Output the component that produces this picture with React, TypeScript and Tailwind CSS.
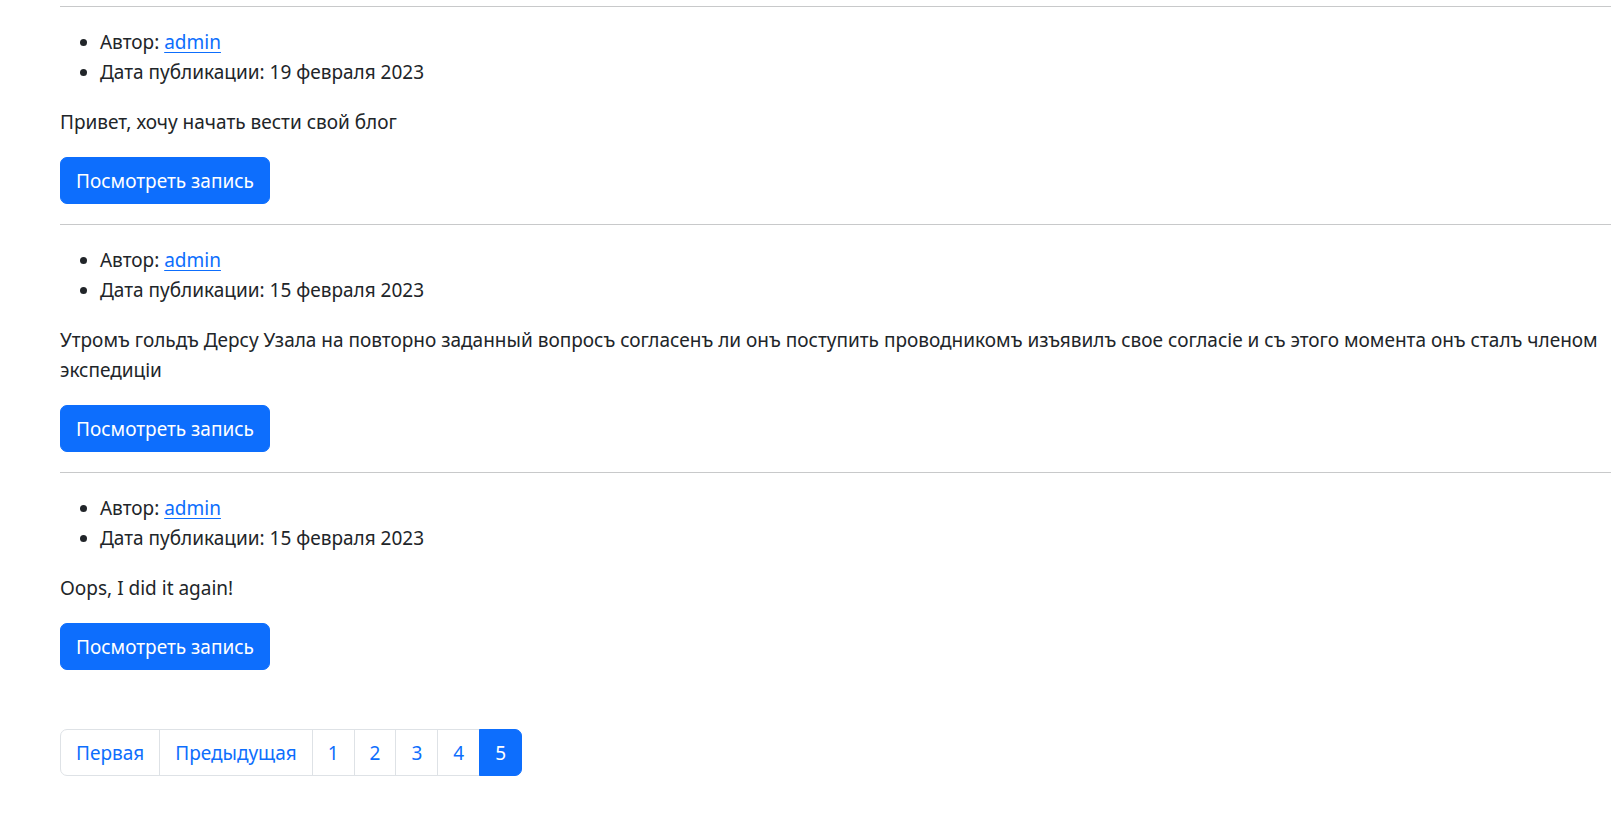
type Post = { date: string; text: string };

const posts: Post[] = [
  { date: "19 февраля 2023", text: "Привет, хочу начать вести свой блог" },
  {
    date: "15 февраля 2023",
    text: "Утромъ гольдъ Дерсу Узала на повторно заданный вопросъ согласенъ ли онъ поступить проводникомъ изъявилъ свое согласіе и съ этого момента онъ сталъ членом экспедиціи",
  },
  { date: "15 февраля 2023", text: "Oops, I did it again!" },
];

function PostItem({ post }: { post: Post }) {
  return (
    <div>
      <hr className="my-[20px] border-0 border-t border-[#c8c9ca]" />
      <ul className="list-disc pl-[40px] mb-[20px]">
        <li>
          Автор:{" "}
          <a href="#" className="text-[#0d6efd] underline underline-offset-[3px]">
            admin
          </a>
        </li>
        <li>Дата публикации: {post.date}</li>
      </ul>
      <p className="mb-[20px]">{post.text}</p>
      <a
        href="#"
        className="inline-block bg-[#0d6efd] text-white border border-[#0d6efd] rounded-[7px] px-[15px] py-[7.5px] leading-[30px]"
      >
        Посмотреть запись
      </a>
    </div>
  );
}

export default function App() {
  const pages = [
    { label: "Первая" },
    { label: "Предыдущая" },
    { label: "1" },
    { label: "2" },
    { label: "3" },
    { label: "4" },
    { label: "5", active: true },
  ];
  return (
    <div
      className="min-h-screen bg-white text-[#212529] text-[19px] leading-[30px] pl-[60px] pt-[6px] -mt-[20px] overflow-hidden"
      style={{ fontFamily: '"Noto Sans", "Open Sans", sans-serif' }}
    >
      {posts.map((p, i) => (
        <PostItem key={i} post={p} />
      ))}
      <nav className="mt-[59px]">
        <ul className="flex">
          {pages.map((pg, i) => (
            <li key={i} className={i > 0 ? "-ml-px" : ""}>
              <a
                href="#"
                className={
                  "block px-[15px] py-[7.5px] leading-[30px] border " +
                  (pg.active
                    ? "bg-[#0d6efd] border-[#0d6efd] text-white relative z-10"
                    : "bg-white border-[#dee2e6] text-[#0d6efd]") +
                  (i === 0 ? " rounded-l-[7px]" : "") +
                  (i === pages.length - 1 ? " rounded-r-[7px]" : "")
                }
              >
                {pg.label}
              </a>
            </li>
          ))}
        </ul>
      </nav>
    </div>
  );
}
